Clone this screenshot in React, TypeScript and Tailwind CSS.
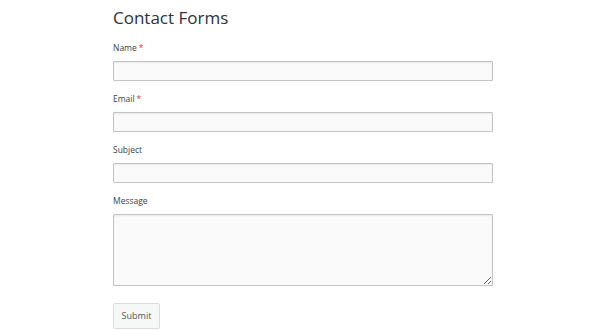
import React from "react";

function Field({ label, required, tall }: { label: string; required?: boolean; tall?: boolean }) {
  return (
    <div className="flex flex-col">
      <label className="text-[8.5px] leading-[12px] text-[#3c434a] h-[12px]">
        {label}
        {required && <span className="text-[#d63638] ml-[2px]">*</span>}
      </label>
      {tall ? (
        <textarea className="mt-[7px] w-[380px] h-[72px] border border-[#c3c4c7] bg-[#fafafa] rounded-[1px] shadow-[inset_0_1px_2px_rgba(0,0,0,0.07)] outline-none" />
      ) : (
        <input className="mt-[7px] w-[380px] h-[20px] border border-[#c3c4c7] bg-[#fafafa] rounded-[1px] shadow-[inset_0_1px_2px_rgba(0,0,0,0.07)] outline-none" />
      )}
    </div>
  );
}

export default function App() {
  return (
    <div className="w-[600px] h-[330px] bg-white overflow-hidden" style={{ fontFamily: '"Open Sans", "Noto Sans", sans-serif' }}>
      <div className="pl-[113px] pt-[6px] flex flex-col">
        <h1 className="text-[17px] leading-[24px] text-[#2c3338] font-normal">Contact Forms</h1>
        <div className="mt-[12px] flex flex-col gap-[12px]">
          <Field label="Name" required />
          <Field label="Email" required />
          <Field label="Subject" />
          <Field label="Message" tall />
        </div>
        <button className="mt-[17px] w-[47px] h-[26px] border border-[#dcdcde] bg-[#f6f7f7] rounded-[2px] text-[9px] text-[#50575e]">
          Submit
        </button>
      </div>
    </div>
  );
}
